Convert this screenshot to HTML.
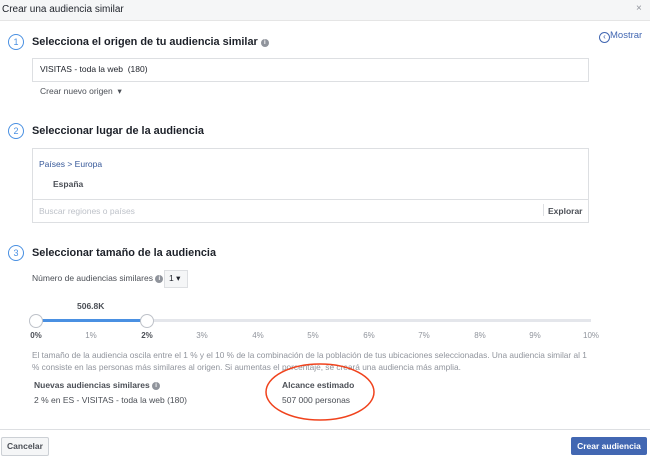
<!DOCTYPE html><html><head><meta charset="utf-8"><style>
body{margin:0;width:650px;height:458px;background:#fff;font-family:"Liberation Sans",Arial,sans-serif;color:#1d2129;position:relative;overflow:hidden}
.a{position:absolute;white-space:nowrap}
.circ{position:absolute;width:14px;height:14px;border:1.5px solid #4a90e2;border-radius:50%;color:#4a90e2;font-size:9px;text-align:center;line-height:14px}
.h{font-size:10.9px;font-weight:bold;color:#1d2129}
.box{position:absolute;border:1px solid #dddfe2;background:#fff}
.g{color:#90949c}
.tick{position:absolute;top:331px;font-size:8px;color:#90949c;transform:translateX(-50%)}
.info{display:inline-block;width:8px;height:8px;border-radius:50%;background:#90949c;color:#fff;font-size:6px;text-align:center;line-height:8px;font-weight:bold;vertical-align:1px}
</style></head><body>
<div class="a" style="left:0;top:0;width:650px;height:20px;background:#f5f6f7;border-bottom:1px solid #e5e5e5"></div>
<div class="a" style="left:2px;top:4px;font-size:10px">Crear una audiencia similar</div>
<div class="a g" style="left:636px;top:3px;font-size:10px">×</div>
<div class="a" style="left:599px;top:30px;font-size:9.5px;color:#4267b2"><span style="display:inline-block;width:9px;height:9px;border:1px solid #4267b2;border-radius:50%;font-size:8px;line-height:8px;text-align:center;vertical-align:-1px">‹</span>Mostrar</div>

<div class="circ" style="left:8px;top:34px">1</div>
<div class="a h" style="left:32px;top:36px">Selecciona el origen de tu audiencia similar <span class="info">i</span></div>
<div class="box" style="left:32px;top:58px;width:555px;height:22px"></div>
<div class="a" style="left:40px;top:64px;font-size:8.5px">VISITAS - toda la web &nbsp;(180)</div>
<div class="a" style="left:40px;top:86px;font-size:8.5px;color:#4b4f56">Crear nuevo origen &nbsp;▾</div>

<div class="circ" style="left:8px;top:123px">2</div>
<div class="a h" style="left:32px;top:125px">Seleccionar lugar de la audiencia</div>
<div class="box" style="left:32px;top:148px;width:555px;height:73px"></div>
<div class="a" style="left:33px;top:199px;width:555px;height:1px;background:#dddfe2"></div>
<div class="a" style="left:39px;top:159px;font-size:8.5px;color:#365899">Países &gt; Europa</div>
<div class="a" style="left:53px;top:179px;font-size:8.5px;font-weight:bold;color:#4b4f56">España</div>
<div class="a" style="left:39px;top:206px;font-size:8.5px;color:#bec2c9">Buscar regiones o países</div>
<div class="a" style="left:543px;top:204px;width:1px;height:12px;background:#dddfe2"></div>
<div class="a" style="left:548px;top:206px;font-size:8.5px;font-weight:bold;color:#4b4f56">Explorar</div>

<div class="circ" style="left:8px;top:245px">3</div>
<div class="a h" style="left:32px;top:247px">Seleccionar tamaño de la audiencia</div>
<div class="a" style="left:32px;top:273px;font-size:8.5px;color:#4b4f56">Número de audiencias similares <span class="info">i</span></div>
<div class="box" style="left:164px;top:270px;width:22px;height:16px;background:#f5f6f7"></div>
<div class="a" style="left:169px;top:273px;font-size:8.5px">1 ▾</div>

<div class="a" style="left:77px;top:301px;font-size:8.5px;font-weight:bold;color:#4b4f56">506.8K</div>
<div class="a" style="left:36px;top:319px;width:555px;height:3px;background:#e4e6eb"></div>
<div class="a" style="left:36px;top:319px;width:111px;height:3px;background:#4a90e2"></div>
<div class="a" style="left:29px;top:314px;width:12px;height:12px;border-radius:50%;background:#fff;border:1px solid #bec2c9"></div>
<div class="a" style="left:140px;top:314px;width:12px;height:12px;border-radius:50%;background:#fff;border:1px solid #bec2c9"></div>
<div class="tick" style="left:36px;font-weight:bold;color:#4b4f56">0%</div>
<div class="tick" style="left:91px">1%</div>
<div class="tick" style="left:147px;font-weight:bold;color:#4b4f56">2%</div>
<div class="tick" style="left:202px">3%</div>
<div class="tick" style="left:258px">4%</div>
<div class="tick" style="left:313px">5%</div>
<div class="tick" style="left:369px">6%</div>
<div class="tick" style="left:424px">7%</div>
<div class="tick" style="left:480px">8%</div>
<div class="tick" style="left:535px">9%</div>
<div class="tick" style="left:591px">10%</div>

<div class="a g" style="left:32px;top:349px;font-size:8.3px;line-height:12px">El tamaño de la audiencia oscila entre el 1 % y el 10 % de la combinación de la población de tus ubicaciones seleccionadas. Una audiencia similar al 1<br>% consiste en las personas más similares al origen. Si aumentas el porcentaje, se creará una audiencia más amplia.</div>
<div class="a" style="left:34px;top:380px;font-size:8.5px;font-weight:bold;color:#4b4f56">Nuevas audiencias similares <span class="info">i</span></div>
<div class="a" style="left:34px;top:395px;font-size:8.5px;color:#4b4f56">2 % en ES - VISITAS - toda la web (180)</div>
<div class="a" style="left:282px;top:380px;font-size:8.5px;font-weight:bold;color:#4b4f56">Alcance estimado</div>
<div class="a" style="left:282px;top:395px;font-size:8.5px;color:#4b4f56">507 000 personas</div>
<svg class="a" style="left:260px;top:360px" width="120" height="65"><ellipse cx="60" cy="32" rx="54" ry="28" fill="none" stroke="#f0421c" stroke-width="1.5"/></svg>

<div class="a" style="left:0;top:429px;width:650px;height:1px;background:#dddfe2"></div>
<div class="a" style="left:1px;top:437px;width:46px;height:17px;border:1px solid #ccd0d5;background:#f5f6f7;border-radius:2px;font-size:8.5px;font-weight:bold;color:#4b4f56;text-align:center;line-height:17px">Cancelar</div>
<div class="a" style="left:571px;top:437px;width:76px;height:18px;background:#4267b2;border-radius:2px;font-size:8.5px;font-weight:bold;color:#fff;text-align:center;line-height:18px">Crear audiencia</div>
</body></html>
